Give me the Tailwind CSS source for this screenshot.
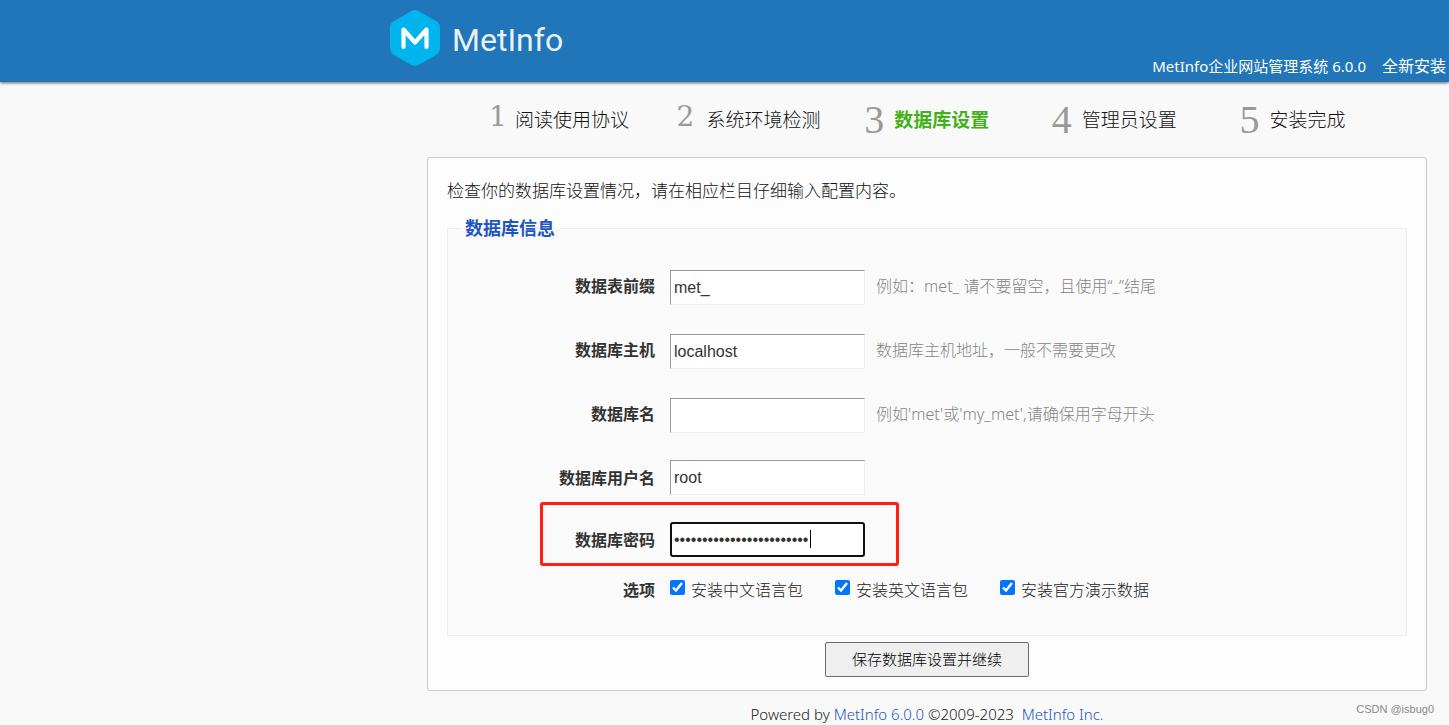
<!DOCTYPE html>
<html lang="zh-CN">
<head>
<meta charset="utf-8">
<meta name="viewport" content="width=device-width, initial-scale=1">
<title>MetInfo 安装 - 数据库设置</title>
<script src="https://cdn.jsdelivr.net/npm/@tailwindcss/browser@4"></script>
</head>
<body class="relative min-h-screen overflow-x-hidden bg-[#f9f9f9] font-['Noto_Sans','Noto_Sans_CJK_SC',sans-serif] text-base text-[#333]">

<header class="flex h-[82px] items-end justify-between bg-[#2175b9] pr-[3px] pl-[390px] text-white shadow-[0_1px_3px_rgba(0,0,0,0.6)]">
  <a href="#" class="mb-4 flex items-center gap-3">
    <svg class="h-14 w-[50px]" viewBox="0 0 50 56" fill="none" aria-hidden="true">
      <path d="M21 1.2Q25-1 29 1.2L46 11Q50 13.4 50 18V38Q50 42.6 46 45L29 54.8Q25 57 21 54.8L4 45Q0 42.6 0 38V18Q0 13.4 4 11Z" fill="#00b5ee"/>
      <path d="M13.500 37V19.500L25 32.500L36.500 19.500V37" stroke="#fff" stroke-width="4.200" stroke-linecap="round" stroke-linejoin="round"/>
    </svg>
    <span class="mt-1 font-['Roboto',sans-serif] text-[32px] leading-10 text-[#e9f1f8]">MetInfo</span>
  </a>
  <div class="mb-1 flex items-center gap-4 text-[15px] leading-6">
    <span>MetInfo企业网站管理系统 6.0.0</span>
    <span class="text-base leading-6">全新安装</span>
  </div>
</header>

<main class="mr-[22px] ml-[427px]">
  <ol class="grid h-[75px] grid-cols-5 pl-[62px] text-[19px] leading-7 font-light text-[#111]">
    <li class="flex items-start gap-2 pt-6"><span class="mt-px w-[18px] font-['DejaVu_Serif',serif] text-[28px] leading-5 font-normal text-[#999]">1</span><span>阅读使用协议</span></li>
    <li class="flex items-start gap-3 pt-6"><span class="mt-px w-[18px] font-['DejaVu_Serif',serif] text-[28px] leading-5 font-normal text-[#999]">2</span><span>系统环境检测</span></li>
    <li class="flex items-start gap-3 pt-6"><span class="w-[18px] font-['Liberation_Serif',serif] text-[40px] leading-7 font-normal text-[#999]">3</span><span class="font-bold text-[#44b019]">数据库设置</span></li>
    <li class="flex items-start gap-3 pt-6"><span class="w-[18px] font-['Liberation_Serif',serif] text-[40px] leading-7 font-normal text-[#999]">4</span><span>管理员设置</span></li>
    <li class="flex items-start gap-3 pt-6"><span class="w-[18px] font-['Liberation_Serif',serif] text-[40px] leading-7 font-normal text-[#999]">5</span><span>安装完成</span></li>
  </ol>

  <form class="rounded-[3px] border border-[#ccc] bg-[#fdfdfd] px-[19px] pt-[21px] pb-[13px]">
    <p class="text-[17px] leading-6 font-light text-[#111]">检查你的数据库设置情况，请在相应栏目仔细输入配置内容。</p>
    <fieldset class="mt-[13px] border border-[#ededed] bg-[#fafafa] pb-[33px] pl-[13px]">
      <legend class="px-1 text-[18px] leading-6 font-bold text-[#1d56c0]">数据库信息</legend>

      <div class="mt-[30px] mb-[29px] flex h-[35px] items-center">
        <label for="prefix" class="mb-1 w-[194px] text-right font-bold">数据表前缀</label>
        <input id="prefix" type="text" value="met_" class="ml-[15px] h-[35px] w-[195px] border border-t-[#999] border-r-[#eee] border-b-[#eee] border-l-[#999] bg-white px-[3px] font-['Liberation_Sans',sans-serif] text-base">
        <span class="mb-1 ml-[11px] font-light text-[#858585]">例如：met_ 请不要留空，且使用“_”结尾</span>
      </div>
      <div class="mb-[29px] flex h-[35px] items-center">
        <label for="host" class="mb-1 w-[194px] text-right font-bold">数据库主机</label>
        <input id="host" type="text" value="localhost" class="ml-[15px] h-[35px] w-[195px] border border-t-[#999] border-r-[#eee] border-b-[#eee] border-l-[#999] bg-white px-[3px] font-['Liberation_Sans',sans-serif] text-base">
        <span class="mb-1 ml-[11px] font-light text-[#858585]">数据库主机地址，一般不需要更改</span>
      </div>
      <div class="mb-[27px] flex h-[35px] items-center">
        <label for="dbname" class="mb-1 w-[194px] text-right font-bold">数据库名</label>
        <input id="dbname" type="text" class="ml-[15px] h-[35px] w-[195px] border border-t-[#999] border-r-[#eee] border-b-[#eee] border-l-[#999] bg-white px-[3px] font-['Liberation_Sans',sans-serif] text-base">
        <span class="mb-1 ml-[11px] font-light text-[#858585]">例如'met'或'my_met',请确保用字母开头</span>
      </div>
      <div class="mb-[27px] flex h-[35px] items-center">
        <label for="user" class="w-[194px] text-right font-bold">数据库用户名</label>
        <input id="user" type="text" value="root" class="ml-[15px] h-[35px] w-[195px] border border-t-[#999] border-r-[#eee] border-b-[#eee] border-l-[#999] bg-white px-[3px] font-['Liberation_Sans',sans-serif] text-base">
      </div>
      <div class="relative mb-[21px] flex h-[35px] items-center">
        <label for="password" class="w-[194px] text-right font-bold">数据库密码</label>
        <div class="relative ml-[15px]">
          <input id="password" type="password" value="metinfo-install-password" class="block h-[35px] w-[195px] rounded-[3px] border-2 border-[#101010] bg-white px-0.5 font-['Liberation_Sans',sans-serif] text-base caret-transparent outline-none">
          <span class="absolute top-2 left-[140px] h-[18px] w-px bg-black"></span>
        </div>
        <div class="pointer-events-none absolute -top-5 left-[79px] h-16 w-[359px] rounded-[3px] border-[3px] border-[#ff1f12]"></div>
      </div>
      <div class="flex h-6 items-center">
        <span class="w-[194px] text-right font-bold">选项</span>
        <div class="ml-[15px] flex items-center gap-8 font-light text-[#222]">
          <label class="flex items-center gap-1.5"><input type="checkbox" checked class="mb-1.5 size-[15px] accent-[#0075ff]">安装中文语言包</label>
          <label class="flex items-center gap-1.5"><input type="checkbox" checked class="mb-1.5 size-[15px] accent-[#0075ff]">安装英文语言包</label>
          <label class="flex items-center gap-1.5"><input type="checkbox" checked class="mb-1.5 size-[15px] accent-[#0075ff]">安装官方演示数据</label>
        </div>
      </div>
    </fieldset>
    <div class="mt-1.5 flex justify-center">
      <button type="submit" class="h-[35px] w-[204px] rounded-[2px] border border-[#6b6b6b] bg-[#efefef] text-[15px] font-light text-black">保存数据库设置并继续</button>
    </div>
  </form>

  <footer class="pt-3 text-center font-['Noto_Sans',sans-serif] text-[15px] leading-[22px] font-light text-[#222]">
    Powered by <a href="#" class="text-[#1d56c0]">MetInfo 6.0.0</a> ©2009-2023 &nbsp;<a href="#" class="text-[#1d56c0]">MetInfo Inc.</a>
  </footer>
</main>

<span class="absolute right-[15px] bottom-2 font-['Liberation_Sans',sans-serif] text-[11px] leading-4 text-[#888]">CSDN @isbug0</span>
</body>
</html>
